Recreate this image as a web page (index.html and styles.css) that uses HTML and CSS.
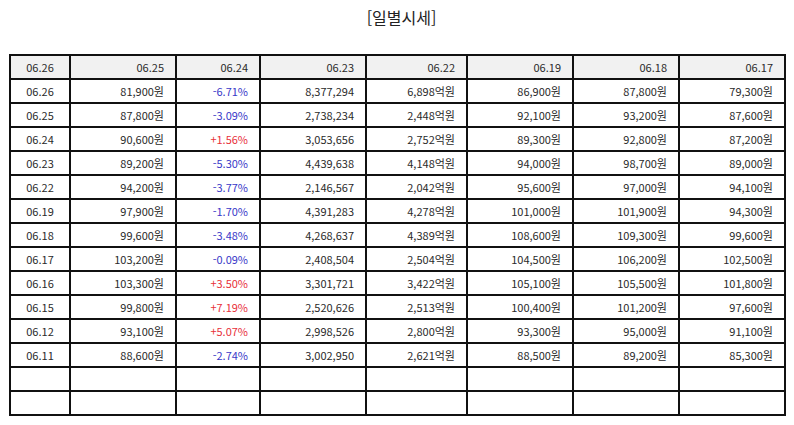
FILE: index.html
```html
<!DOCTYPE html>
<html lang="ko">
<head>
<meta charset="utf-8">
<link rel="stylesheet" href="styles.css">
</head>
<body>
<div class="page">
  <div class="title">[일별시세]</div>
  <table class="grid">
    <colgroup>
      <col class="c1"><col class="c2"><col class="c3"><col class="c4"><col class="c5"><col class="c6"><col class="c7"><col class="c8">
    </colgroup>
    <tr class="head"><td class="date">06.26</td><td>06.25</td><td>06.24</td><td>06.23</td><td>06.22</td><td>06.19</td><td>06.18</td><td>06.17</td></tr>
    <tr><td class="date">06.26</td><td>81,900원</td><td class="down">-6.71%</td><td>8,377,294</td><td>6,898억원</td><td>86,900원</td><td>87,800원</td><td>79,300원</td></tr>
    <tr><td class="date">06.25</td><td>87,800원</td><td class="down">-3.09%</td><td>2,738,234</td><td>2,448억원</td><td>92,100원</td><td>93,200원</td><td>87,600원</td></tr>
    <tr><td class="date">06.24</td><td>90,600원</td><td class="up">+1.56%</td><td>3,053,656</td><td>2,752억원</td><td>89,300원</td><td>92,800원</td><td>87,200원</td></tr>
    <tr><td class="date">06.23</td><td>89,200원</td><td class="down">-5.30%</td><td>4,439,638</td><td>4,148억원</td><td>94,000원</td><td>98,700원</td><td>89,000원</td></tr>
    <tr><td class="date">06.22</td><td>94,200원</td><td class="down">-3.77%</td><td>2,146,567</td><td>2,042억원</td><td>95,600원</td><td>97,000원</td><td>94,100원</td></tr>
    <tr><td class="date">06.19</td><td>97,900원</td><td class="down">-1.70%</td><td>4,391,283</td><td>4,278억원</td><td>101,000원</td><td>101,900원</td><td>94,300원</td></tr>
    <tr><td class="date">06.18</td><td>99,600원</td><td class="down">-3.48%</td><td>4,268,637</td><td>4,389억원</td><td>108,600원</td><td>109,300원</td><td>99,600원</td></tr>
    <tr><td class="date">06.17</td><td>103,200원</td><td class="down">-0.09%</td><td>2,408,504</td><td>2,504억원</td><td>104,500원</td><td>106,200원</td><td>102,500원</td></tr>
    <tr><td class="date">06.16</td><td>103,300원</td><td class="up">+3.50%</td><td>3,301,721</td><td>3,422억원</td><td>105,100원</td><td>105,500원</td><td>101,800원</td></tr>
    <tr><td class="date">06.15</td><td>99,800원</td><td class="up">+7.19%</td><td>2,520,626</td><td>2,513억원</td><td>100,400원</td><td>101,200원</td><td>97,600원</td></tr>
    <tr><td class="date">06.12</td><td>93,100원</td><td class="up">+5.07%</td><td>2,998,526</td><td>2,800억원</td><td>93,300원</td><td>95,000원</td><td>91,100원</td></tr>
    <tr><td class="date">06.11</td><td>88,600원</td><td class="down">-2.74%</td><td>3,002,950</td><td>2,621억원</td><td>88,500원</td><td>89,200원</td><td>85,300원</td></tr>
    <tr><td class="date"></td><td></td><td></td><td></td><td></td><td></td><td></td><td></td></tr>
    <tr><td class="date"></td><td></td><td></td><td></td><td></td><td></td><td></td><td></td></tr>
  </table>
</div>
</body>
</html>
```
FILE: styles.css
```css
html, body {
  margin: 0;
  padding: 0;
  background: #fff;
}
body {
  font-family: "Noto Sans CJK KR", "Noto Sans", sans-serif;
  color: #222;
}
.page {
  padding: 0 0 0 9px;
}
.title {
  text-align: center;
  font-size: 16px;
  line-height: 20px;
  padding-top: 7px;
  height: 29px;
  color: #222;
}
.grid {
  margin-top: 18px;
  border-collapse: collapse;
  table-layout: fixed;
  width: 775px;
  font-size: 11px;
}
.grid td {
  border: 2px solid #111;
  height: 22px;
  padding: 0 11px 0 4px;
  text-align: right;
  white-space: nowrap;
  line-height: 14px;
  color: #2a2a2a;
}
.grid td.date {
  text-align: center;
  padding: 0;
}
.grid .head td {
  background: #f1f1f1;
}
.grid td.down { color: #3838c8; }
.grid td.up { color: #e8303a; }
.c1 { width: 60px; }
.c2 { width: 106px; }
.c3 { width: 84px; }
.c4 { width: 106px; }
.c5 { width: 101px; }
.c6 { width: 106px; }
.c7 { width: 106px; }
.c8 { width: 106px; }
```
